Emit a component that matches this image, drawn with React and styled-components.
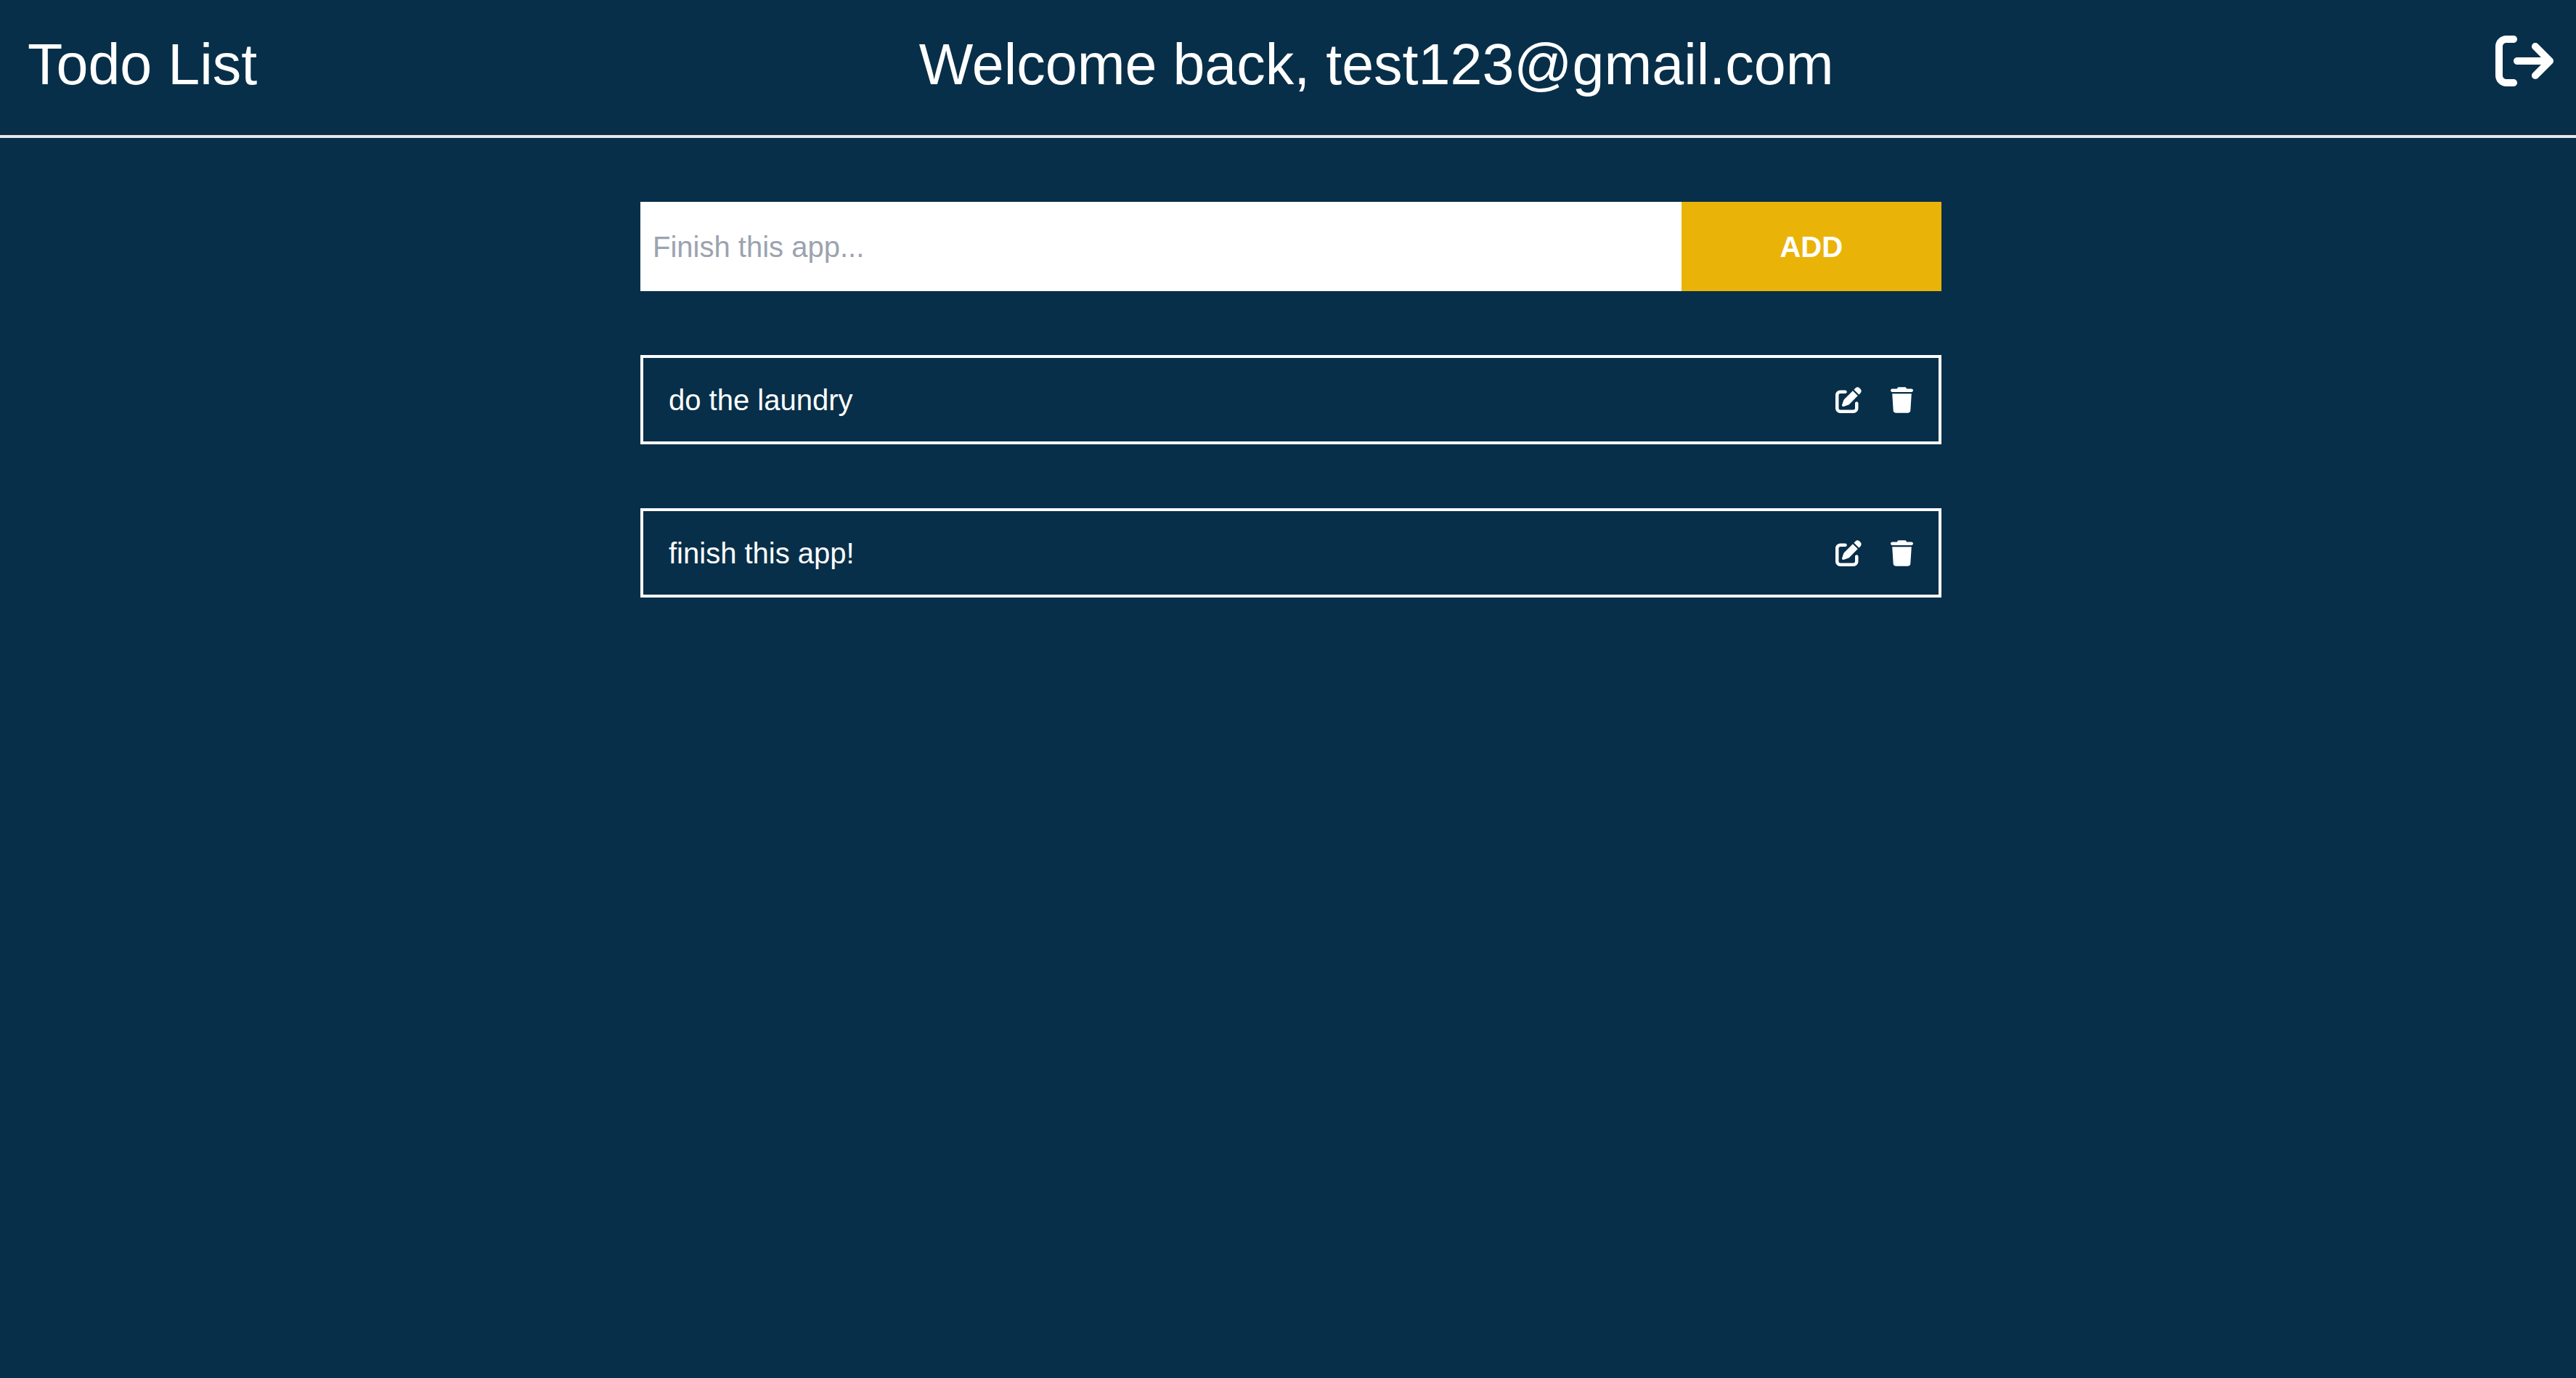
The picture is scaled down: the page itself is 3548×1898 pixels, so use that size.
import React, { useState } from "react";
import styled, { createGlobalStyle } from "styled-components";
import { FaArrowRightFromBracket, FaPenToSquare, FaTrash } from "react-icons/fa6";

const GlobalStyle = createGlobalStyle`
  *, *::before, *::after { box-sizing: border-box; }
  body {
    margin: 0;
    background: #082f49;
    color: #fff;
    font-family: "Liberation Sans", Helvetica, Arial, sans-serif;
    font-size: 40px;
    line-height: 52px;
  }
  button, input { font: inherit; color: inherit; border: 0; border-radius: 0; margin: 0; }
  button { background: none; padding: 0; cursor: pointer; }
`;

const Page = styled.div`
  min-height: 100vh;
`;

const Header = styled.header`
  display: flex;
  align-items: flex-start;
  justify-content: space-between;
  padding: 44px 31px 52px 38px;
  border-bottom: 4px solid #e5e7eb;
`;

const Heading = styled.h1`
  margin: 0;
  font-size: 79px;
  line-height: 90px;
  font-weight: 400;
`;

const IconButton = styled.button`
  display: flex;

  svg {
    width: ${({ $width, $size }) => $width ?? $size}px;
    height: ${({ $size }) => $size}px;
  }
`;

const Main = styled.main`
  display: flex;
  flex-direction: column;
  align-items: center;
  gap: 88px;
  padding: 88px 0 88px 8px;
`;

const AddForm = styled.form`
  display: flex;
  width: 100%;
  max-width: 1792px;
  height: 123px;
`;

const TaskInput = styled.input`
  flex: 1;
  min-width: 0;
  padding: 0 17px;
  background: #fff;
  color: #0f172a;
  outline: none;

  &::placeholder { color: #9ca3af; opacity: 1; }
`;

const AddButton = styled.button`
  width: 20%;
  background: #eab308;
  font-weight: 700;
`;

const List = styled.ul`
  display: flex;
  flex-direction: column;
  gap: 88px;
  width: 100%;
  max-width: 1792px;
  margin: 0;
  padding: 0;
  list-style: none;
`;

const Item = styled.li`
  display: flex;
  align-items: center;
  justify-content: space-between;
  height: 123px;
  padding: 0 35px;
  border: 4px solid #fff;
`;

const Actions = styled.div`
  display: flex;
  gap: 40px;
`;

export default function App() {
  const [draft, setDraft] = useState("");
  const [todos, setTodos] = useState(["do the laundry", "finish this app!"]);

  const addTodo = (event) => {
    event.preventDefault();
    if (!draft.trim()) return;
    setTodos([...todos, draft.trim()]);
    setDraft("");
  };

  const removeTodo = (index) => setTodos(todos.filter((_, i) => i !== index));

  const editTodo = (index) => {
    setDraft(todos[index]);
    removeTodo(index);
  };

  return (
    <Page>
      <GlobalStyle />
      <Header>
        <Heading>Todo List</Heading>
        <Heading as="p">Welcome back, test123@gmail.com</Heading>
        <IconButton type="button" $size={80} aria-label="Log out">
          <FaArrowRightFromBracket />
        </IconButton>
      </Header>
      <Main>
        <AddForm onSubmit={addTodo}>
          <TaskInput
            type="text"
            aria-label="New task"
            placeholder="Finish this app..."
            value={draft}
            onChange={(event) => setDraft(event.target.value)}
          />
          <AddButton type="submit">ADD</AddButton>
        </AddForm>
        <List>
          {todos.map((todo, index) => (
            <Item key={`${todo}-${index}`}>
              <span>{todo}</span>
              <Actions>
                <IconButton type="button" $size={36} aria-label="Edit task" onClick={() => editTodo(index)}>
                  <FaPenToSquare />
                </IconButton>
                <IconButton type="button" $size={36} $width={31} aria-label="Delete task" onClick={() => removeTodo(index)}>
                  <FaTrash />
                </IconButton>
              </Actions>
            </Item>
          ))}
        </List>
      </Main>
    </Page>
  );
}
